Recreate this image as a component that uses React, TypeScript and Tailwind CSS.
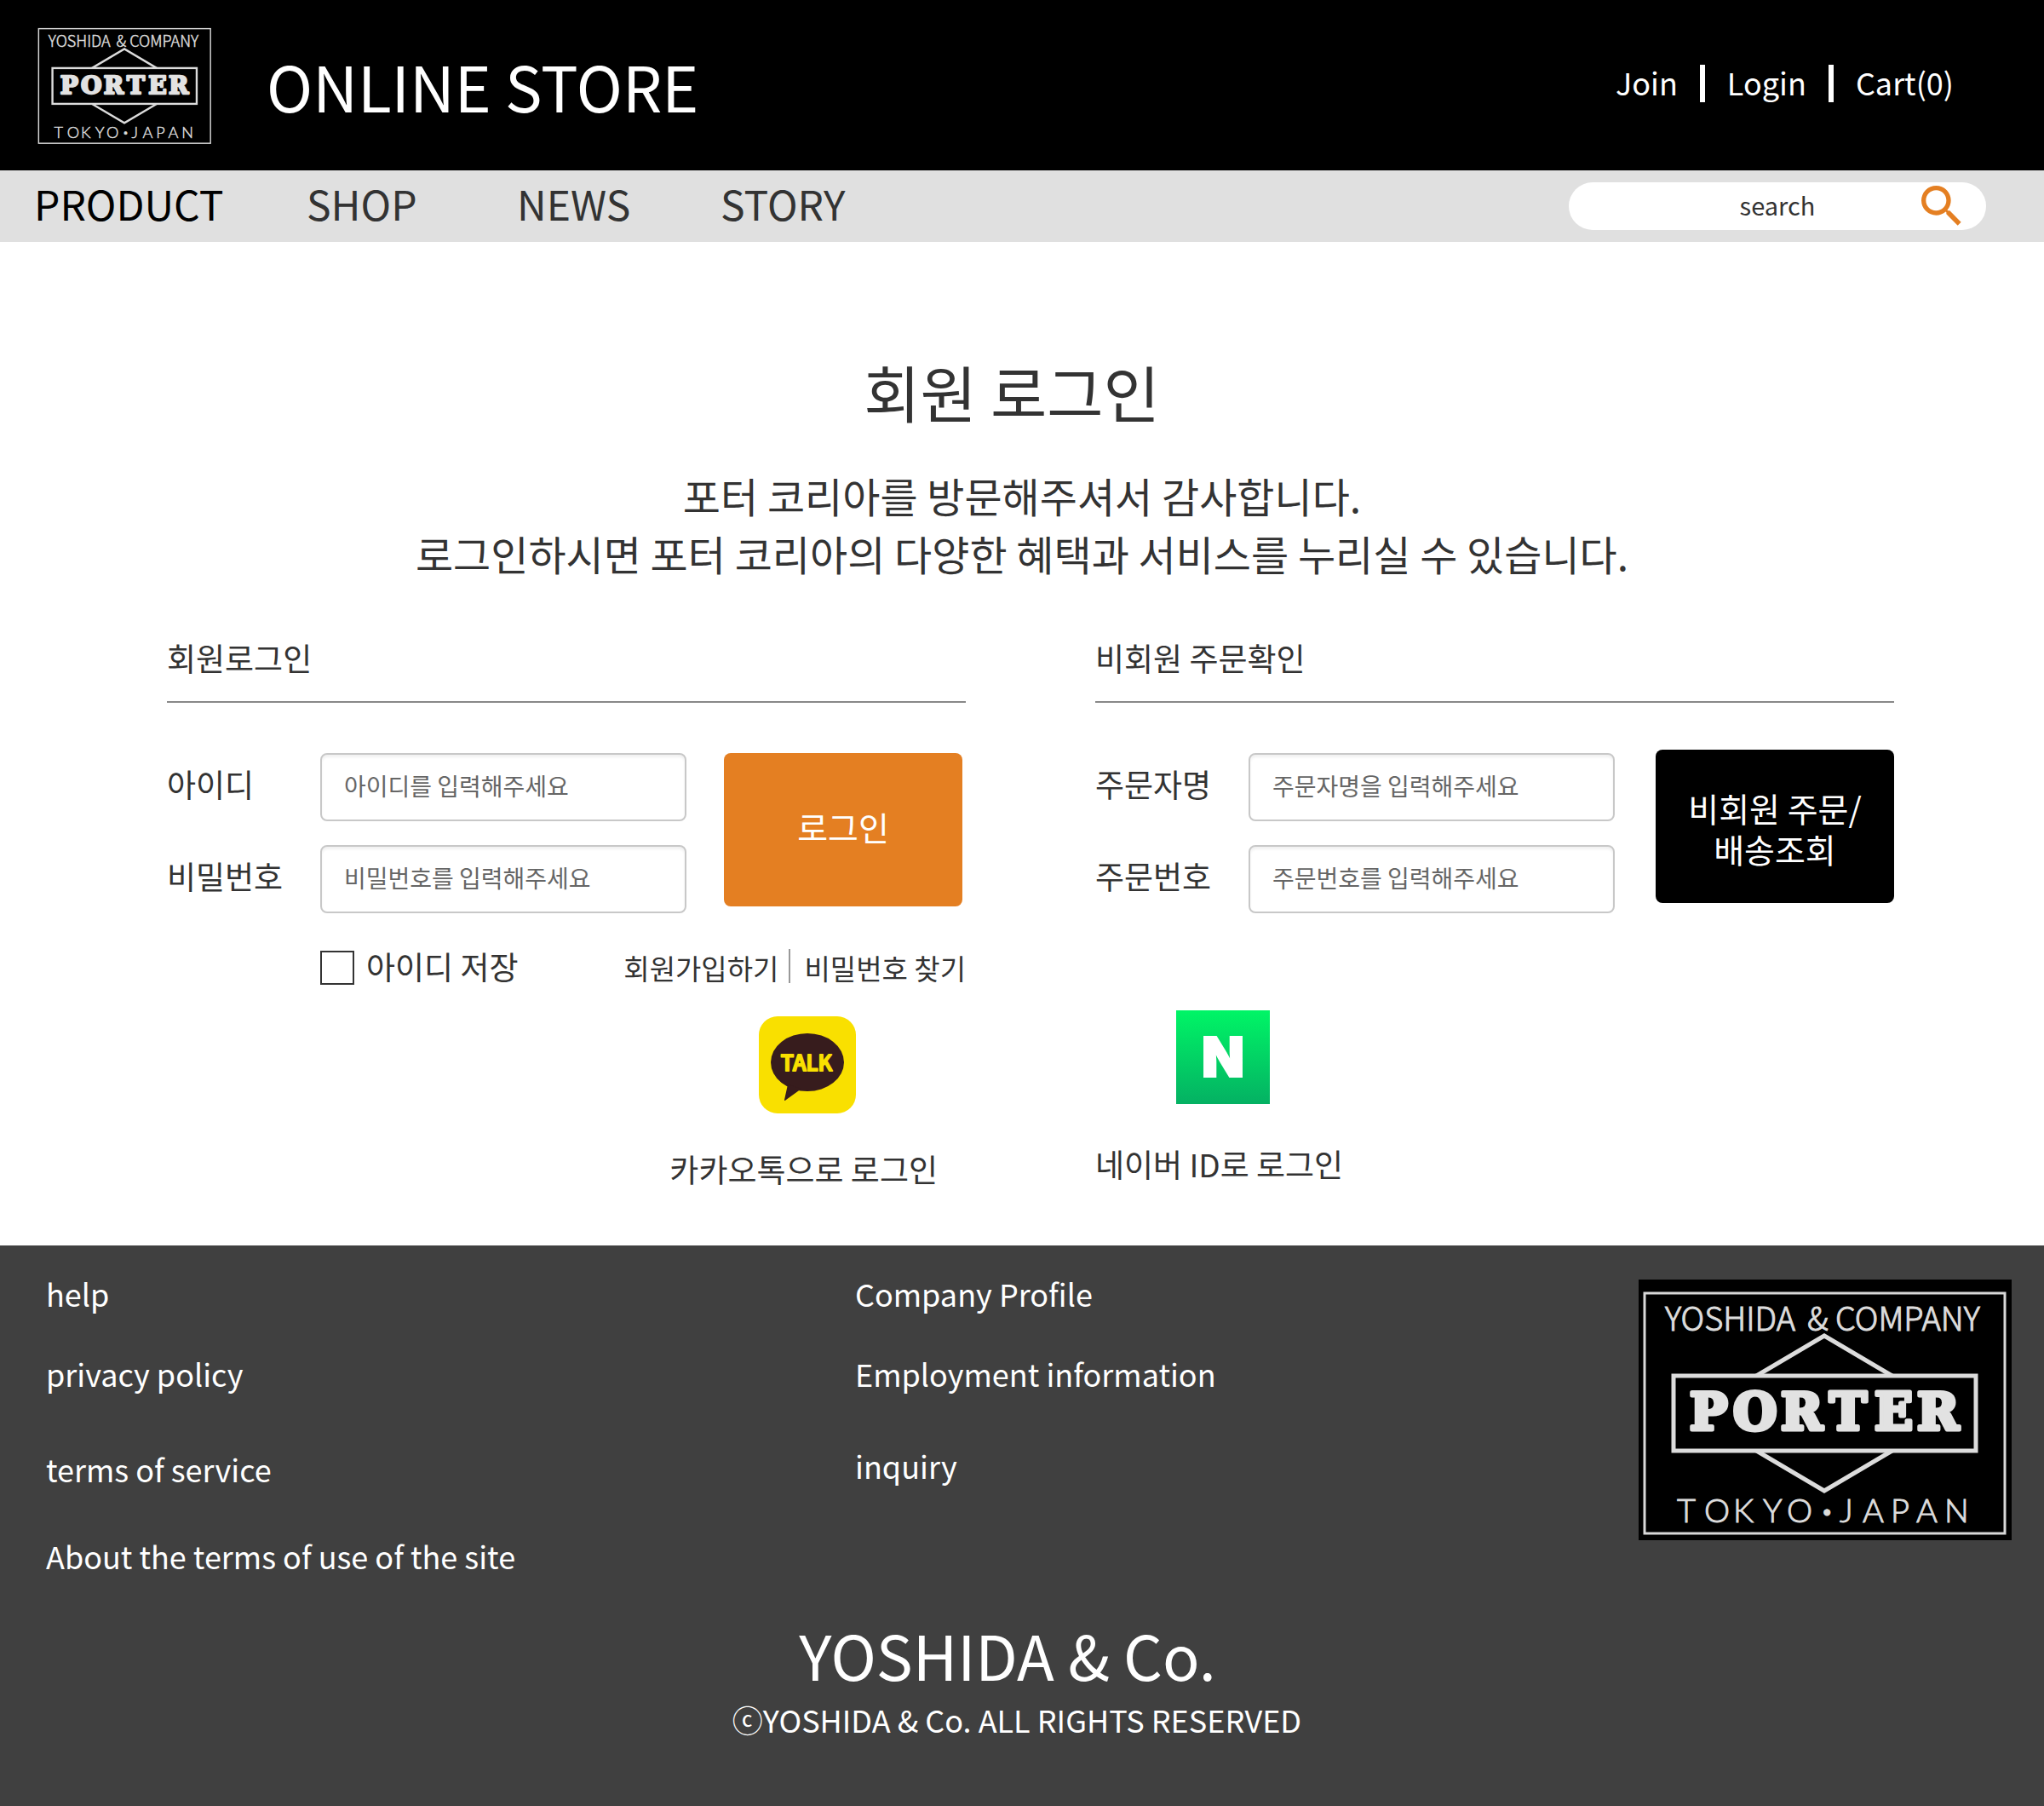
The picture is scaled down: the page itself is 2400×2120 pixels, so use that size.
import React from "react";
import { MdSearch } from "react-icons/md";

function PorterLogo({ className }: { className: string }) {
  return (
    <svg viewBox="0 0 438 306" className={className} role="img" aria-label="Yoshida & Company Porter Tokyo Japan">
      <rect width="438" height="306" fill="#000" />
      <rect x="7" y="16" width="423" height="282" fill="none" stroke="#d8d8d8" strokeWidth="3" />
      <path d="M135 115 L218 66 L301 115 M135 199 L218 248 L301 199" fill="none" stroke="#dcdcdc" strokeWidth="5" />
      <rect x="41" y="113" width="355" height="88" fill="#000" stroke="#dcdcdc" strokeWidth="5" />
      <g fill="#dcdcdc" stroke="#dcdcdc" strokeWidth="1" fontSize="38" fontWeight="300">
        <g fontFamily="'Noto Sans CJK KR', sans-serif">
          <text x="31" y="60">YOSHIDA</text>
          <text x="198" y="60">&amp;</text>
          <text x="231" y="60">COMPANY</text>
        </g>
        <text x="45 77 111 146 174 216 236 263 296 326 359" y="285" fontFamily="Lato, sans-serif">
          TOKYO<tspan fontWeight="700">·</tspan>JAPAN
        </text>
      </g>
      <text
        x="60 111 167 224 277 327"
        y="176"
        fill="#e2e2e2"
        stroke="#e2e2e2"
        strokeWidth="5"
        strokeLinejoin="round"
        fontSize="59"
        fontWeight="700"
        fontFamily="'DejaVu Serif', serif"
      >
        PORTER
      </text>
    </svg>
  );
}

function KakaoIcon({ className }: { className: string }) {
  return (
    <svg viewBox="0 0 114 114" className={className} aria-hidden="true">
      <rect width="114" height="114" rx="22" fill="#f9e000" />
      <ellipse cx="57" cy="54" rx="43" ry="34" fill="#371c1d" />
      <path d="M34 80 L30 98 Q30 100 32 98 L50 85 Z" fill="#371c1d" />
      <text
        x="56"
        y="64"
        textAnchor="middle"
        fill="#f9e000"
        stroke="#f9e000"
        strokeWidth="2"
        strokeLinejoin="round"
        fontSize="25"
        fontWeight="500"
        fontFamily="'Noto Sans CJK KR', sans-serif"
      >
        TALK
      </text>
    </svg>
  );
}

function NaverIcon({ className }: { className: string }) {
  return (
    <svg viewBox="0 0 110 110" className={className} aria-hidden="true">
      <defs>
        <linearGradient id="naver" x1="0" y1="0" x2="0" y2="1">
          <stop offset="0" stopColor="#00f566" />
          <stop offset="1" stopColor="#04b163" />
        </linearGradient>
      </defs>
      <rect width="110" height="110" fill="url(#naver)" />
      <text
        x="55"
        y="78"
        textAnchor="middle"
        fill="#fff"
        stroke="#fff"
        strokeWidth="2"
        fontSize="65"
        fontWeight="900"
        fontFamily="Inter, sans-serif"
      >
        N
      </text>
    </svg>
  );
}

function Field({ id, label, placeholder, type = "text" }: { id: string; label: string; placeholder: string; type?: string }) {
  return (
    <div className="flex h-20 items-center">
      <label htmlFor={id} className="w-[180px] shrink-0 pb-2 text-[37px] leading-[48px]">
        {label}
      </label>
      <input
        id={id}
        type={type}
        placeholder={placeholder}
        className="h-20 min-w-0 flex-1 rounded-lg border-2 border-[#c8c8c8] bg-white px-[26px] pb-1 text-[28px] shadow-[inset_0_3px_3px_rgba(0,0,0,0.06)] placeholder:text-[#666] placeholder:opacity-100"
      />
    </div>
  );
}

const heading = "border-b-2 border-[#888] pb-[27px] text-[37px] leading-[48px]";

export default function App() {
  return (
    <div className="bg-white font-['Noto_Sans_CJK_KR',sans-serif] text-[#333]">
      <header className="flex h-[200px] items-center justify-between bg-black pl-[42px] pr-[106px] text-white">
        <div className="flex items-center">
          <PorterLogo className="mb-0.5 h-[146px] w-[209px]" />
          <a href="#home" className="ml-[62px] text-[73px] leading-[88px]">
            ONLINE STORE
          </a>
        </div>
        <div className="flex items-center pb-1 text-[36px] leading-[40px]">
          <a href="#join" className="pb-1">Join</a>
          <span className="mx-[26px] h-11 w-1.5 bg-white" />
          <a href="#login" className="pb-1">Login</a>
          <span className="mx-[26px] h-11 w-1.5 bg-white" />
          <a href="#cart" className="pb-1">Cart(0)</a>
        </div>
      </header>

      <nav className="flex h-[84px] items-center justify-between bg-[#e0e0e0] pl-[40px] pr-[68px]">
        <div className="grid grid-cols-[320px_247px_239px_auto] pb-2 text-[48px] leading-[60px]">
          <a href="#product" className="text-black">PRODUCT</a>
          <a href="#shop">SHOP</a>
          <a href="#news">NEWS</a>
          <a href="#story">STORY</a>
        </div>
        <form className="relative">
          <input
            aria-label="search"
            placeholder="search"
            className="h-14 w-[490px] rounded-full bg-white px-20 pb-1 text-center text-[29px] placeholder:text-[#333] placeholder:opacity-100"
          />
          <button type="button" aria-label="Search" className="absolute -top-1 right-5 text-[#e47f22]">
            <MdSearch className="size-16" />
          </button>
        </form>
      </nav>

      <main className="pt-[123px] pb-[66px]">
        <h1 className="pr-6 text-center text-[72px] leading-[104px]">회원 로그인</h1>
        <p className="mt-9 text-center text-[48px] leading-[68px]">
          포터 코리아를 방문해주셔서 감사합니다.
          <br />
          로그인하시면 포터 코리아의 다양한 혜택과 서비스를 누리실 수 있습니다.
        </p>

        <div className="mt-[65px] grid grid-cols-2 gap-x-[152px] pl-[196px] pr-[176px]">
          <section>
            <h2 className={heading}>회원로그인</h2>
            <form className="pt-[59px]">
              <div className="flex items-start gap-11">
                <div className="flex flex-1 flex-col gap-7">
                  <Field id="user" label="아이디" placeholder="아이디를 입력해주세요" />
                  <Field id="password" label="비밀번호" placeholder="비밀번호를 입력해주세요" type="password" />
                </div>
                <button type="button" className="mr-1 h-[180px] w-[280px] rounded-lg bg-[#e47f22] pb-2 text-[39px] leading-[48px] text-white">
                  로그인
                </button>
              </div>
              <div className="mt-[42px] flex h-11 items-center justify-between pl-[180px]">
                <label className="flex items-center gap-3.5 text-[37px] leading-[40px]">
                  <input type="checkbox" className="size-10 appearance-none border-2 border-[#333] bg-white checked:bg-[#333]" />
                  <span className="pb-1">아이디 저장</span>
                </label>
                <div className="flex items-center text-[33px] leading-[40px]">
                  <a href="#signup">회원가입하기</a>
                  <span className="ml-3 mr-4 mb-1 h-10 w-0.5 bg-[#999]" />
                  <a href="#find">비밀번호 찾기</a>
                </div>
              </div>
            </form>
          </section>

          <section>
            <h2 className={heading}>비회원 주문확인</h2>
            <form className="flex items-start gap-12 pt-[55px]">
              <div className="flex flex-1 flex-col gap-7 pt-1">
                <Field id="orderer" label="주문자명" placeholder="주문자명을 입력해주세요" />
                <Field id="order" label="주문번호" placeholder="주문번호를 입력해주세요" />
              </div>
              <button type="button" className="h-[180px] w-[280px] rounded-lg bg-black pt-1 text-[39px] leading-[48px] text-white">
                비회원 주문/
                <br />
                배송조회
              </button>
            </form>
          </section>

          <div className="mt-7 flex items-start justify-end pr-[33px] pt-[7px]">
            <a href="#kakao" className="flex flex-col items-center gap-[41px] text-[37px] leading-[48px]">
              <KakaoIcon className="ml-2 size-[114px]" />
              카카오톡으로 로그인
            </a>
          </div>
          <div className="mt-7 flex items-start">
            <a href="#naver" className="flex flex-col items-center gap-[46px] text-[37px] leading-[48px]">
              <NaverIcon className="ml-2 size-[110px]" />
              네이버 ID로 로그인
            </a>
          </div>
        </div>
      </main>

      <footer className="bg-[#404040] pt-8 pb-20 text-white">
        <div className="flex items-start pl-[54px] pr-[38px] text-[36px] leading-[48px]">
          <div className="flex w-[950px] flex-col items-start">
            <a href="#help">help</a>
            <a href="#privacy" className="mt-[46px]">privacy policy</a>
            <a href="#terms" className="mt-16">terms of service</a>
            <a href="#about" className="mt-[54px]">About the terms of use of the site</a>
          </div>
          <div className="flex flex-1 flex-col items-start">
            <a href="#company">Company Profile</a>
            <a href="#employment" className="mt-[46px]">Employment information</a>
            <a href="#inquiry" className="mt-[60px]">inquiry</a>
          </div>
          <PorterLogo className="mt-2 h-[306px] w-[438px]" />
        </div>
        <p className="mt-12 pr-[34px] text-center text-[72px] leading-[88px]">YOSHIDA &amp; Co.</p>
        <p className="mt-2 pr-3 text-center text-[36px] leading-[48px]">ⓒYOSHIDA &amp; Co. ALL RIGHTS RESERVED</p>
      </footer>
    </div>
  );
}
